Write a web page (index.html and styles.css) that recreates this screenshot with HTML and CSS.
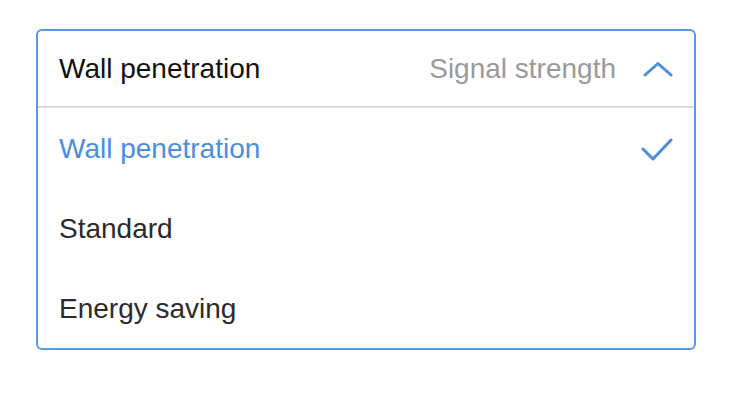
FILE: index.html
```html
<!DOCTYPE html>
<html>
<head>
<meta charset="utf-8">
<link rel="stylesheet" href="styles.css">
</head>
<body>
<div class="select">
  <div class="select-head">
    <span class="head-value">Wall penetration</span>
    <span class="head-label">Signal strength</span>
    <svg class="chevron" width="30" height="18" viewBox="0 0 30 18"><path d="M2 15 L15 3.5 L28 15" fill="none" stroke="#4a8ee0" stroke-width="3" stroke-linecap="round" stroke-linejoin="round"/></svg>
  </div>
  <ul class="options">
    <li class="option selected">
      <span>Wall penetration</span>
      <svg class="check" width="32" height="26" viewBox="0 0 32 26"><path d="M2 13 L12 23 L30 4" fill="none" stroke="#4a8ee0" stroke-width="3" stroke-linecap="round" stroke-linejoin="round"/></svg>
    </li>
    <li class="option"><span>Standard</span></li>
    <li class="option"><span>Energy saving</span></li>
  </ul>
</div>
</body>
</html>
```
FILE: styles.css
```css
html, body {
  margin: 0;
  padding: 0;
  background: #ffffff;
}
body {
  padding: 29px 0 0 36px;
  font-family: "Liberation Sans", Arial, sans-serif;
}
.select {
  box-sizing: border-box;
  width: 660px;
  border: 2px solid #5b96e0;
  border-radius: 6px;
  overflow: hidden;
}
.select-head {
  box-sizing: border-box;
  height: 77px;
  display: flex;
  align-items: center;
  padding: 1px 21px 0 21px;
  border-bottom: 2px solid #d9d9d9;
  font-size: 28px;
}
.head-value {
  color: #111111;
  flex: 1;
}
.head-label {
  color: #9a9a9a;
  margin-right: 27px;
}
.chevron {
  display: block;
}
.options {
  list-style: none;
  margin: 0;
  padding: 0;
}
.option {
  box-sizing: border-box;
  height: 80px;
  display: flex;
  align-items: center;
  justify-content: space-between;
  padding: 1px 21px 0 21px;
  font-size: 28px;
  color: #2b2b2b;
}
.option.selected {
  color: #4a8ee0;
}
.check {
  display: block;
}
```
